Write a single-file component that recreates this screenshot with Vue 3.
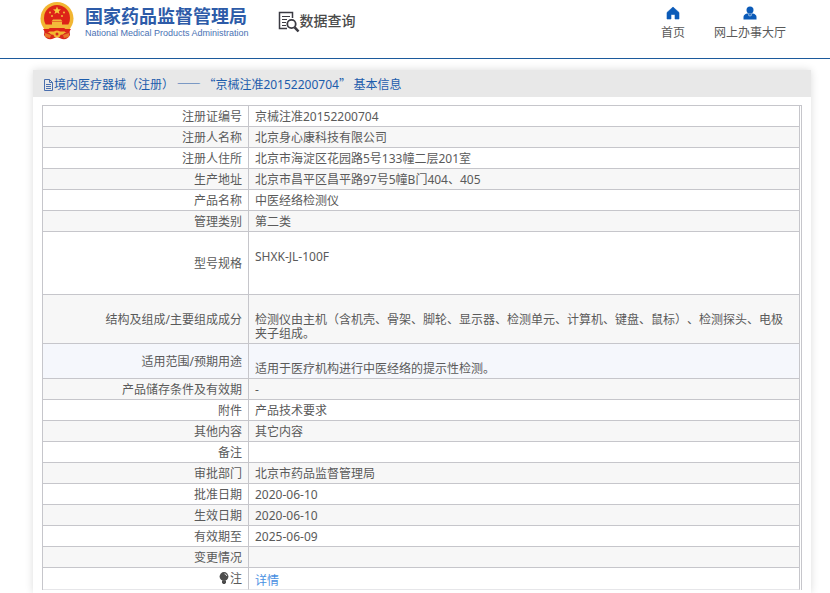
<script setup>
const rows = [
  { label: '注册证编号', value: '京械注准20152200704' },
  { label: '注册人名称', value: '北京身心康科技有限公司' },
  { label: '注册人住所', value: '北京市海淀区花园路5号133幢二层201室' },
  { label: '生产地址', value: '北京市昌平区昌平路97号5幢B门404、405' },
  { label: '产品名称', value: '中医经络检测仪' },
  { label: '管理类别', value: '第二类' },
  { label: '型号规格', value: 'SHXK-JL-100F', kind: 'model' },
  {
    label: '结构及组成/主要组成成分',
    value: '检测仪由主机（含机壳、骨架、脚轮、显示器、检测单元、计算机、键盘、鼠标）、检测探头、电极夹子组成。',
    kind: 'lead'
  },
  { label: '适用范围/预期用途', value: '适用于医疗机构进行中医经络的提示性检测。', kind: 'lead active' },
  { label: '产品储存条件及有效期', value: '-' },
  { label: '附件', value: '产品技术要求' },
  { label: '其他内容', value: '其它内容' },
  { label: '备注', value: '' },
  { label: '审批部门', value: '北京市药品监督管理局' },
  { label: '批准日期', value: '2020-06-10' },
  { label: '生效日期', value: '2020-06-10' },
  { label: '有效期至', value: '2025-06-09' },
  { label: '变更情况', value: '' },
  { label: '注', value: '详情', kind: 'note', link: true }
]
</script>

<template>
  <div class="page" lang="zh-CN">
    <header class="top">
      <a class="brand" href="#">
        <svg class="emblem" viewBox="0 0 34 38" aria-hidden="true">
          <path d="M5 24 L4 33 Q6 38 12 37 L17 35 L22 37 Q28 38 30 33 L29 24Z" fill="#d9291c" />
          <circle cx="17" cy="16.500" r="16.500" fill="#f2b632" />
          <circle cx="17" cy="16" r="13" fill="#dd2318" />
          <path d="M17 4.500l1.100 2.700 2.900.2-2.200 1.900.7 2.800-2.500-1.500-2.500 1.500.7-2.800L13 7.400l2.900-.2z" fill="#f7c93f" />
          <g fill="#f3b93a">
            <circle cx="10" cy="10.500" r="1" /><circle cx="24" cy="10.500" r="1" />
            <circle cx="12" cy="14" r="1" /><circle cx="22" cy="14" r="1" />
            <path d="M13 17.500h8l1.500 2h-11zM12 20h10v2.500H12zM6 22.500h22V26H6z" />
          </g>
          <path d="M3 27h28l-2 3H5z" fill="#dd2318" />
          <path d="M9 29.500h16l-2 3H11z" fill="#f2b632" />
          <circle cx="17" cy="32" r="3.500" fill="#f2b632" />
          <circle cx="17" cy="32" r="1.500" fill="#d9291c" />
          <path d="M5 31l6 2-1 3-5-1zM29 31l-6 2 1 3 5-1z" fill="#e8792a" />
        </svg>
        <span class="names">
          <span class="cn">国家药品监督管理局</span>
          <span class="en">National Medical Products Administration</span>
        </span>
      </a>
      <a class="query" href="#">
        <svg class="query-icon" viewBox="0 0 22 22" fill="none" stroke="#3b3b43" aria-hidden="true">
          <path d="M14.500 7V1.500h-13v16H9" stroke-width="1.500" />
          <path d="M4 5.500h8M4 8.500h5M4 11.500h4M4 14.500h4" />
          <circle cx="13.500" cy="13" r="4.200" stroke-width="1.800" />
          <path d="M16.700 16.300L20.500 20.500" stroke-width="2.600" />
        </svg>
        <span>数据查询</span>
      </a>
      <nav class="nav">
        <a href="#">
          <svg viewBox="0 0 14 14" aria-hidden="true">
            <path d="M7 1L1 6.500V13h4V8.500h4V13h4V6.500z" fill="#0b5bb8" stroke="#0b5bb8" stroke-linejoin="round" stroke-width=".6" />
          </svg>
          <span>首页</span>
        </a>
        <a href="#">
          <svg viewBox="0 0 14 14" aria-hidden="true">
            <circle cx="7" cy="4" r="3.500" fill="#0b5bb8" />
            <path d="M.5 13.500V11Q.5 8.500 4 7.500h6q3.500 1 3.500 3.500v2.500z" fill="#0b5bb8" />
            <path d="M5 8.200l1.300 2.600L6.500 8.800zM9 8.200l-1.300 2.600L7.500 8.800z" fill="#fff" />
          </svg>
          <span>网上办事大厅</span>
        </a>
      </nav>
    </header>

    <main class="card">
      <h1 class="title">
        <svg viewBox="0 0 11 12" fill="none" stroke="#4a6fae" aria-hidden="true">
          <path d="M1.500.5h5l3 3v8h-8zM6.500.5v3h3M3 5.500h5M3 7.500h5M3 9.500h5" />
        </svg>
        <span><span class="han">境内医疗器械（注册） —— “京械注准</span>20152200704<span class="han">” 基本信息</span></span>
      </h1>
      <div class="frame">
        <table>
          <tbody>
            <tr v-for="row in rows" :key="row.label" :class="row.kind">
              <th scope="row">
                <svg v-if="row.link" class="bulb" viewBox="0 0 10 12" aria-hidden="true">
                  <circle cx="5" cy="4.500" r="4.400" fill="#4c4c4c" />
                  <path d="M3 8.500h4v2L6 12H4l-1-1.500z" fill="#4c4c4c" />
                  <path d="M5.500 1.800q2 .3 2.300 2.200" fill="none" stroke="#fff" stroke-width=".8" />
                </svg>{{ row.label }}
              </th>
              <td>
                <a v-if="row.link" href="#">{{ row.value }}</a>
                <template v-else>{{ row.value }}</template>
              </td>
            </tr>
          </tbody>
        </table>
      </div>
    </main>
  </div>
</template>

<style>
body {
  background: #fff;
}
</style>

<style scoped>
.page {
  box-sizing: border-box;
  min-height: 100vh;
  display: flex;
  flex-direction: column;
  font-family: "Noto Sans", "Noto Sans CJK SC", sans-serif;
  font-size: 12px;
  line-height: 14px;
  color: #5a5a5a;
  text-spacing-trim: space-all;
}
a {
  color: inherit;
  text-decoration: none;
}
.top {
  box-sizing: border-box;
  height: 59px;
  display: flex;
  align-items: flex-start;
  padding: 2px 44px 0 40px;
  border-bottom: 1px solid #1c5a9c;
}
.brand {
  display: flex;
  gap: 11px;
}
.emblem {
  width: 34px;
  height: 38px;
}
.names {
  display: flex;
  flex-direction: column;
  padding-top: 3px;
  white-space: nowrap;
  color: #2d5ba8;
}
.cn {
  font-size: 18px;
  line-height: 22px;
  font-weight: 700;
}
.en {
  font-family: "Liberation Sans", sans-serif;
  font-size: 9px;
  line-height: 13px;
  color: #4a72b4;
}
.query {
  display: flex;
  align-items: center;
  margin-left: 29px;
  padding-top: 9px;
  font-size: 14px;
  font-weight: 500;
  line-height: 20px;
  white-space: nowrap;
  color: #4a4a4a;
}
.query span {
  padding-bottom: 2px;
}
.query-icon {
  width: 22px;
  height: 22px;
}
.nav {
  display: flex;
  gap: 29px;
  margin-left: auto;
  padding-top: 4px;
}
.nav a {
  display: flex;
  flex-direction: column;
  align-items: center;
  gap: 6px;
  white-space: nowrap;
}
.nav svg {
  width: 14px;
  height: 14px;
}
.card {
  flex: 1;
  margin: 11px 19px 0 33px;
  background: #fff;
  box-shadow: 0 0 8px rgba(0, 0, 0, 0.14);
}
.title {
  display: flex;
  align-items: center;
  margin: 0;
  padding: 7px 10px 5px;
  background: #e8e8e8;
  color: #1c5cac;
  font-size: 12px;
  font-weight: 400;
  line-height: 14px;
}
.title svg {
  flex: none;
  width: 11px;
  height: 12px;
}
.han {
  font-family: "Noto Sans CJK SC", sans-serif;
}
.frame {
  margin: 8px 9px 3px;
  padding-right: 1px;
  border: 1px solid #c6c6cb;
  border-bottom: 0;
}
table {
  width: 100%;
  border-spacing: 0;
}
th,
td {
  padding: 4px 6px 2px;
  height: 14px;
  border-right: 1px solid #c6c6cb;
  border-bottom: 1px solid #c6c6cb;
  font-weight: 400;
  vertical-align: middle;
}
th {
  width: 193px;
  text-align: right;
}
td {
  text-align: left;
}
tr:nth-child(even) {
  background: #f7f7f7;
}
.model td {
  padding-top: 18px;
  padding-bottom: 30px;
}
.lead td {
  padding-top: 18px;
}
tr.active {
  background: #f5f7fc;
}
.note th,
.note td {
  border-bottom-color: #e6e6e9;
}
.note th {
  padding-top: 3px;
  padding-bottom: 3px;
}
.note td {
  padding-top: 6px;
  padding-bottom: 1px;
}
.note a {
  color: #4a90e2;
}
.bulb {
  width: 10px;
  height: 12px;
  margin-right: 1px;
  vertical-align: -1px;
}
</style>
